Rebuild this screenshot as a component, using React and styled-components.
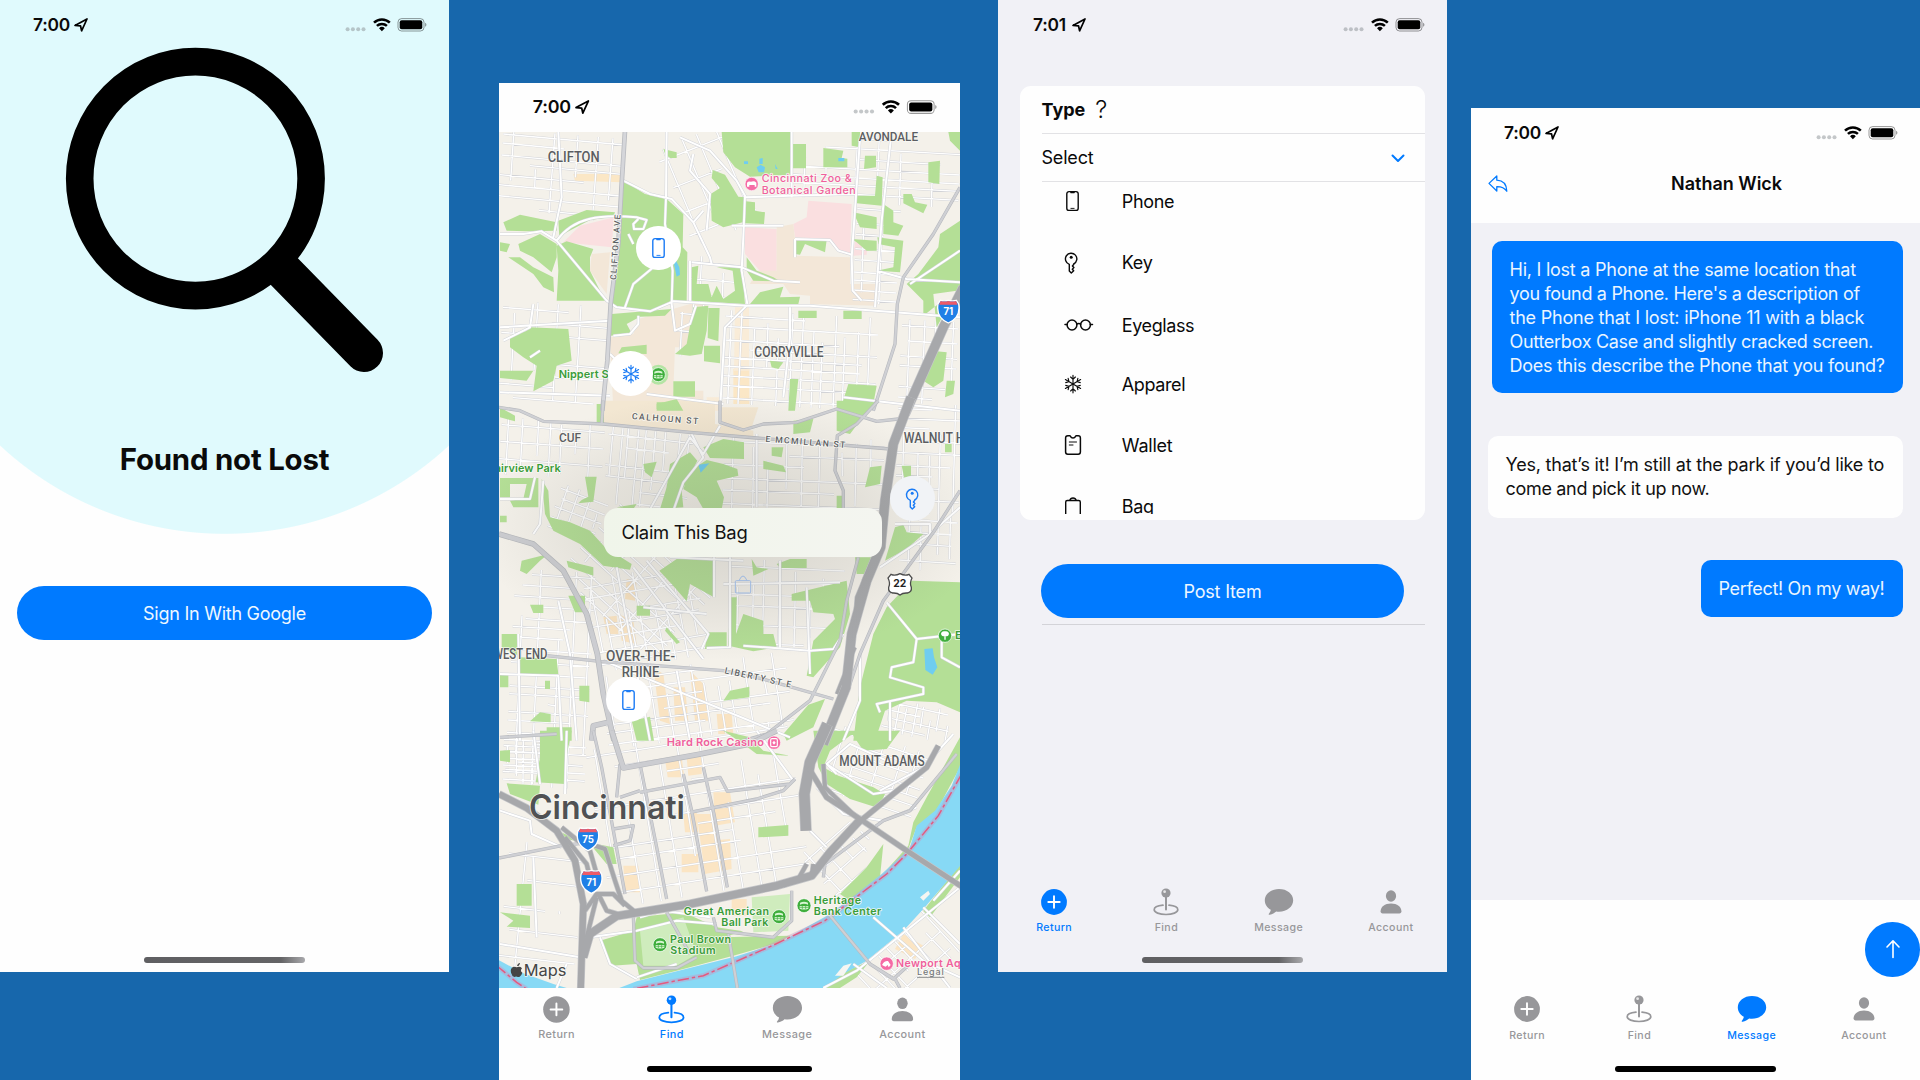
import React from "react";
import styled, { createGlobalStyle } from "styled-components";

const BLUE = "#007aff";
const GRAY = "#97979a";

const GlobalStyle = createGlobalStyle`
  * { box-sizing: border-box; }
  body { margin: 0; background: #1767ac; font-family: Inter, "Liberation Sans", sans-serif; }
`;

const Page = styled.main`
  width: 1920px;
  height: 1080px;
  overflow: hidden;
  display: flex;
  align-items: flex-start;
  background: #1767ac;
`;

const Phone = styled.section`
  flex: none;
  display: flex;
  flex-direction: column;
  overflow: hidden;
  width: ${(p) => p.$w || 449}px;
  height: ${(p) => p.$h || 972}px;
  margin-top: ${(p) => p.$top || 0}px;
  margin-left: ${(p) => p.$left || 0}px;
  background: ${(p) => p.$bg || "#fefefe"};
  color: #0a0a0a;
`;

/* ---------- status bar ---------- */

const StatusRow = styled.header`
  flex: none;
  display: flex;
  align-items: center;
  height: ${(p) => p.$h || 49}px;
  padding: 0 ${(p) => 23.5 * p.$s}px 0 ${(p) => 32.5 * p.$s}px;
`;

const Time = styled.span`
  font-size: ${(p) => 17.4 * p.$s}px;
  line-height: 20px;
  font-weight: 600;
  letter-spacing: -0.2px;
  text-align: center;
  width: ${(p) => 38 * p.$s}px;
  margin-right: ${(p) => 3.7 * p.$s}px;
`;

const Spacer = styled.span`
  flex: 1;
`;

const Glyph = styled.svg`
  flex: none;
  display: block;
  overflow: visible;
`;

function StatusBar({ time = "7:00", s = 1, h }) {
  return (
    <StatusRow $s={s} $h={h}>
      <Time $s={s}>{time}</Time>
      <Glyph width={14 * s} height={14 * s} viewBox="0 0 14 14">
        <path d="M1 7.4 13 1 7.6 12.8 6.5 7.8Z" fill="none" stroke="#000" strokeWidth="1.7" strokeLinejoin="round" />
      </Glyph>
      <Spacer />
      <Glyph width={81 * s} height={16 * s} viewBox="0 0 81 16">
        {[2.6, 7.9, 13.2, 18.5].map((x) => (
          <circle key={x} cx={x} cy="12.2" r="2" fill="#8a8f94" opacity="0.5" />
        ))}
        <g fill="none" stroke="#000" strokeWidth="2.5">
          <path d="M29 5.6a11.3 11.3 0 0 1 15.8 0" />
          <path d="M31.9 8.9a7.2 7.2 0 0 1 10 0" />
        </g>
        <path d="M34 11.2a4.2 4.2 0 0 1 5.8 0L36.9 14.2Z" />
        <rect x="53" y="1.6" width="26" height="12.4" rx="3.6" fill="none" stroke="#000" strokeOpacity="0.4" />
        <rect x="54.7" y="3.3" width="22.6" height="9" rx="2" />
        <path d="M80.200 5.800v4a2.300 2.300 0 0 0 0-4Z" opacity="0.45" />
      </Glyph>
    </StatusRow>
  );
}

/* ---------- tab bar ---------- */

const Tabs = styled.nav`
  flex: none;
  display: flex;
  padding: ${(p) => p.$pt}px 0 0;
`;

const TabItem = styled.div`
  flex: 1;
  display: flex;
  flex-direction: column;
  align-items: center;
  color: ${(p) => (p.$on ? BLUE : GRAY)};
`;

const TabLabel = styled.span`
  margin-top: ${(p) => p.$gap}px;
  font-size: ${(p) => 10.6 * p.$s}px;
  line-height: 14px;
  font-weight: 500;
  letter-spacing: ${(p) => 0.4 * p.$s}px;
`;

const tabIcons = {
  Return: (
    <>
      <circle cx="16" cy="16" r="12.9" fill="currentColor" />
      <path d="M16 10.3v11.4M10.3 16h11.4" stroke="#fff" strokeWidth="1.9" strokeLinecap="round" />
    </>
  ),
  Find: (
    <>
      <circle cx="16" cy="7" r="4.6" fill="currentColor" />
      <circle cx="14.6" cy="5.7" r="1.4" fill="#fff" opacity="0.75" />
      <path d="M16 11v12.6" stroke="currentColor" strokeWidth="2" strokeLinecap="round" />
      <path d="M13 19.2c-5 .4-8.8 2.3-8.8 4.6 0 2.7 5.2 4.7 11.8 4.7s11.8-2 11.8-4.7c0-2.3-3.8-4.2-8.8-4.6" fill="none" stroke="currentColor" strokeWidth="1.7" strokeLinecap="round" />
    </>
  ),
  Message: (
    <path d="M16 3C8 3 1.800 7.900 1.800 14.300c0 4 2.300 7.500 6 9.500-.1 1.500-.9 2.800-1.900 3.900-.5.6-.1 1.300.8 1.100 2.500-.5 4.700-1.700 6.500-3.300 1 .2 1.900.2 2.800.2 8 0 14.200-5 14.200-11.400S24 3 16 3Z" fill="currentColor" />
  ),
  Account: (
    <>
      <ellipse cx="16" cy="10" rx="5.1" ry="5.7" fill="currentColor" />
      <path d="M5.600 25.300c0-4.300 4.300-7.700 10.400-7.700s10.400 3.400 10.400 7.700c0 1.400-.7 2.100-2 2.100H7.600c-1.300 0-2-.7-2-2.100Z" fill="currentColor" />
    </>
  ),
};

function TabBar({ active, s = 1, pt, gap = 3.5 }) {
  return (
    <Tabs $pt={pt}>
      {Object.keys(tabIcons).map((name) => (
        <TabItem key={name} $on={name === active}>
          <Glyph width={32 * s} height={32 * s} viewBox="0 0 32 32">{tabIcons[name]}</Glyph>
          <TabLabel $s={s} $gap={gap}>{name}</TabLabel>
        </TabItem>
      ))}
    </Tabs>
  );
}

const HomeBar = styled.div`
  flex: none;
  align-self: center;
  width: ${(p) => p.$w || 160.5}px;
  height: 5.6px;
  border-radius: 3px;
  margin: ${(p) => (p.$mt ? `${p.$mt}px` : "auto")} 0 ${(p) => p.$mb || 9}px;
  background: ${(p) => (p.$faded ? "linear-gradient(90deg, #5f5f62 0%, #646466 85%, #a9a9ac 100%)" : "#000")};
`;

/* ---------- sign in ---------- */

const Hero = styled.div`
  flex: none;
  height: 535px;
  display: flex;
  flex-direction: column;
  background: radial-gradient(circle 330px at 224.5px 204.3px, #e0fafd 99.7%, transparent 100%);
`;

const Title = styled.h1`
  margin: 51px 0 0;
  text-align: center;
  font-size: 29.4px;
  line-height: 36px;
  font-weight: 700;
  letter-spacing: -0.21px;
  color: #0a0a0a;
`;

const Pill = styled.button`
  flex: none;
  align-self: center;
  border: 0;
  width: ${(p) => p.$w}px;
  height: 54px;
  margin-top: ${(p) => p.$mt}px;
  padding: 2px 0 0;
  border-radius: 27px;
  background: ${BLUE};
  color: #eef7ff;
  font: 400 18px/22px Inter, "Liberation Sans", sans-serif;
  letter-spacing: ${(p) => p.$ls}px;
`;

function SignIn() {
  return (
    <Phone>
      <Hero>
        <StatusBar />
        <Glyph width="449" height="342" viewBox="0 49 449 342">
          <ellipse cx="195.4" cy="178.6" rx="115.7" ry="117" fill="none" stroke="#000" strokeWidth="27.6" />
          <path d="M284.500 271.700 364 353" stroke="#000" strokeWidth="38" strokeLinecap="round" />
        </Glyph>
        <Title>Found not Lost</Title>
      </Hero>
      <Pill $w={415} $mt={51} $ls={-0.26}>Sign In With Google</Pill>
      <HomeBar $faded />
    </Phone>
  );
}

/* ---------- map ---------- */

const MapArea = styled.div`
  position: relative;
  flex: none;
  height: 856.5px;
  overflow: hidden;
`;

const MapSvg = styled.svg`
  display: block;
  width: 461px;
  height: 856.5px;
`;

const Pin = styled.div`
  position: absolute;
  left: ${(p) => p.$x}px;
  top: ${(p) => p.$y}px;
  width: 44.6px;
  height: 44.6px;
  margin: -22.3px 0 0 -22.3px;
  border-radius: 50%;
  display: grid;
  place-items: center;
  color: #1a7bf5;
  background: ${(p) => p.$bg || "#fff"};
`;

const Callout = styled.div`
  position: absolute;
  left: 105px;
  top: 376.5px;
  width: 277.5px;
  height: 49px;
  padding-left: 17.5px;
  border-radius: 14px;
  background: linear-gradient(90deg, #f0f5ea, #f4f5f0);
  color: #111;
  font-size: 18.4px;
  line-height: 49px;
  letter-spacing: -0.27px;
`;

const itemIcons = {
  phone: (
    <>
      <rect x="2.8" y="1.6" width="11.4" height="18.8" rx="2.2" fill="none" stroke="currentColor" strokeWidth="1.4" />
      <path d="M6 2h5l-.6 1.300H6.600Z" fill="currentColor" />
      <path d="M6.500 18.400h4" stroke="currentColor" strokeWidth="0.9" />
    </>
  ),
  key: (
    <>
      <path d="M6 12.300V19l2 2 2.400-2.300-1.400-1.500 1.600-1.600-1.500-1.600 1.300-1.500v-.5A5.700 5.700 0 1 0 6 12.300Z" transform="translate(-.7 0)" fill="none" stroke="currentColor" strokeWidth="1.4" strokeLinejoin="round" />
      <circle cx="7.200" cy="5.200" r="1.5" fill="currentColor" />
    </>
  ),
  glasses: (
    <g fill="none" stroke="currentColor" strokeWidth="1.5">
      <circle cx="8" cy="11" r="4.9" />
      <circle cx="21.5" cy="11" r="4.9" />
      <path d="M12.700 10.200q2.050-1.400 4.100 0M3.200 10.500 1 10.500M26.300 10.500h2.200" strokeLinecap="round" />
    </g>
  ),
  snow: (
    <g fill="none" stroke="currentColor" strokeWidth="1.15" strokeLinecap="round">
      {[0, 60, 120, 180, 240, 300].map((a) => (
        <path key={a} transform={`rotate(${a} 9 11)`} d="M9 11V2.200M6.600 4 9 6.300 11.400 4" />
      ))}
    </g>
  ),
  wallet: (
    <g fill="none" stroke="currentColor" strokeWidth="1.5" strokeLinejoin="round">
      <path d="M3.800 1.800h2q.7 0 .9 1 .5 1.300 2.300 1.300t2.300-1.300q.2-1 .9-1h2q2.200 0 2.200 2.200v14q0 2.200-2.200 2.200H3.800q-2.200 0-2.200-2.200V4q0-2.200 2.200-2.200Z" />
      <path d="M4.900 8h8M4.900 11h4.500" strokeWidth="1.2" />
    </g>
  ),
  bag: (
    <g fill="none" stroke="currentColor" strokeWidth="1.4" strokeLinejoin="round">
      <path d="M3.300 5.500h11.400q1.600 0 1.600 1.600v12q0 1.600-1.600 1.600H3.300q-1.600 0-1.600-1.600v-12q0-1.600 1.600-1.600Z" />
      <path d="M5.800 5.500a3.300 3.300 0 0 1 6.400 0" />
    </g>
  ),
};

const iconWidth = { phone: 17, key: 15, glasses: 30, snow: 18, wallet: 18, bag: 18 };

function ItemIcon({ name }) {
  return (
    <Glyph width={iconWidth[name]} height={22} viewBox={`0 0 ${iconWidth[name]} 22`}>
      {itemIcons[name]}
    </Glyph>
  );
}

/* Side streets: a loose rotated grid with uneven line ends. */
function streets(x0, y0, x1, y1, angle, dx, dy, seed) {
  let n = seed;
  const rnd = () => {
    n = (n * 16807) % 2147483647;
    return n / 2147483647;
  };
  for (let i = 0; i < 5; i++) rnd();
  const cx = (x0 + x1) / 2;
  const cy = (y0 + y1) / 2;
  const hw = (x1 - x0) / 2;
  const hh = (y1 - y0) / 2;
  const c = Math.cos((angle * Math.PI) / 180);
  const s = Math.sin((angle * Math.PI) / 180);
  const pt = (a, b) => `${(cx + a * c - b * s).toFixed(0)} ${(cy + a * s + b * c).toFixed(0)}`;
  let d = "";
  for (let a = -hw + dx / 2; a < hw; a += dx * (0.7 + rnd() * 0.6)) {
    const from = -hh + (rnd() < 0.4 ? rnd() * hh : 0);
    const to = hh - (rnd() < 0.4 ? rnd() * hh : 0);
    d += `M${pt(a, from)}L${pt(a + 3, to)}`;
  }
  for (let b = -hh + dy / 2; b < hh; b += dy * (0.7 + rnd() * 0.6)) {
    const from = -hw + (rnd() < 0.4 ? rnd() * hw : 0);
    const to = hw - (rnd() < 0.4 ? rnd() * hw : 0);
    d += `M${pt(from, b)}L${pt(to, b + 2)}`;
  }
  return d;
}

const sideStreets = [
  [30, 190, 395, 440, 5, 62, 30], [545, 190, 760, 500, -22, 50, 70], [905, 190, 1410, 400, 3, 76, 32],
  [1095, 400, 1225, 700, 3, 45, 34], [30, 700, 350, 990, 4, 72, 42], [700, 730, 1160, 1010, 3, 34, 36],
  [1230, 750, 1400, 1000, 3, 46, 36], [30, 1050, 340, 1220, 4, 40, 46], [345, 1080, 600, 1310, 6, 24, 46],
  [700, 1100, 1180, 1320, 2, 52, 40], [1220, 1000, 1410, 1330, 2, 36, 32], [60, 1500, 300, 2150, 3, 52, 30],
  [300, 1500, 640, 1780, -10, 40, 44], [250, 1380, 640, 1680, 42, 70, 34], [720, 1470, 1060, 1730, 2, 42, 46],
  [340, 1780, 900, 2000, -8, 42, 34], [320, 1990, 930, 2470, -9, 54, 42], [40, 2320, 270, 2720, 6, 100, 80],
  [1080, 2560, 1400, 2760, -42, 44, 50], [1000, 2000, 1300, 2200, 18, 60, 34], [190, 1260, 340, 1400, 20, 36, 30],
  [1180, 1900, 1380, 2000, 12, 28, 24], [40, 1980, 150, 2140, 2, 22, 18], [560, 700, 640, 860, 4, 26, 60],
  [1230, 1330, 1400, 1500, 3, 50, 40], [600, 560, 760, 700, 4, 60, 40], [960, 2260, 1180, 2440, -42, 38, 48],
]
  .map((a, i) => streets(...a, 91 + i * 37))
  .join("");

const tints = {
  A: [
    ["#fadfe0", "M955 390 1085 400 1080 550 1045 540 1020 505 915 500 910 460 950 440ZM765 470 860 475 860 600 820 612 765 550ZM220 515 270 465 372 440 365 530ZM1095 512 1132 520 1130 552 1090 555Z"],
    ["#f3e7d8", "M915 555 1080 560 1080 640 1160 640 1155 705 960 700 960 675 900 670 880 640 780 640 800 600 860 600 860 470 910 460 915 505ZM305 550 360 545 350 670 300 600ZM445 745 600 700 650 700 640 780 600 830 555 830 550 960 640 960 640 1020 370 1020 360 800 430 790Z"],
    ["#fbe7c6", "M730 895h48v105h-48ZM250 310h145v25l-140-5Z"],
    ["#f9ecd8", "M735 710h42v190h-45ZM650 980h40v40h-40Z"],
  ],
  B: [
    ["#f3e7d2", "M345 0h330v70l115 20v20l-450-40ZM690 20h115l-20 60-60 5-30-25Z"],
    ["#f9e3c2", "M410 535l30 5-5 60-30-5ZM340 650l40-5 5 55-35 0ZM385 640l45 20 10 70-45-10ZM490 800l30 20 20 150-30-10ZM550 860l35 0 10 100-40 0ZM600 810l40 40 15 110-40 0ZM680 940l45 0 5 60-45 0Z"],
  ],
  C: [
    ["#fbe5c4", "M1240 610l60 35-25 40-60-30ZM525 85l50-5 8 60-50 0ZM590 80l45-5 0 55-40 5ZM620 250l50 0 25 170-50 10ZM670 185l50 0 15 90-60 10ZM575 370h50v55h-50ZM400 405l45 0 5 80-45 0ZM580 250l40-5 5 60-40 0ZM725 505h45v50h-45ZM660 330l60-5 5 90-50 10Z"],
  ],
};

const parks = {
  A: "M695 184H905L900 312 780 318 735 290 700 245ZM668 298 705 312 745 378 765 380 758 455 700 470 665 450 662 370 690 352 665 322ZM768 392 795 395V420L825 425 822 460 765 458ZM400 330 465 370 530 385 580 430 578 530 592 545 590 690 545 690 480 720 375 710 362 690 385 500ZM40 455 90 432 200 455 200 480 110 482 50 480ZM205 450 290 418 375 425 370 438 300 448 230 485 208 500ZM200 525 230 512 310 535 300 560 300 600 345 690 200 690 205 600ZM85 520 150 490 200 520 200 560 185 605 130 560 90 540ZM55 560 90 560 130 590 190 620 192 665 160 650 130 610ZM30 515 60 520 50 545 30 540ZM907 220h41v73h-41ZM1000 232 1060 240 1055 262 1072 264V290H1000ZM1085 184h25v46l-25-5ZM1125 255h33v35l-36 5ZM1315 275 1350 270 1348 340 1315 335ZM1375 184H1410V240L1380 210ZM1100 375 1155 375 1160 315 1178 320 1175 405 1100 398ZM1090 425 1160 440V475L1110 470ZM1180 400 1210 420V455L1240 465 1225 495 1180 490ZM1240 370 1265 370 1275 395 1312 402 1300 428 1240 398ZM1410 450 1350 490 1345 530 1285 610 1250 640 1300 690V735L1345 700 1410 680ZM1162 500 1240 510 1230 605 1160 600 1210 590 1215 530 1165 520ZM915 505 1010 508 1005 545 945 520 930 552 915 550ZM1085 505 1160 510V540L1130 540 1100 515ZM605 590 625 585 620 640 655 640 665 680 680 645 700 685 735 660 728 600 680 590 750 590 760 640 765 700 605 690ZM770 560 800 600 850 620 870 632 790 630 770 600ZM810 665 880 648 870 680 930 678 925 700 780 700ZM365 730 545 715 525 735 450 738 410 760 425 788 362 795ZM610 710 655 705 650 780 635 850 600 855 555 850 590 820ZM655 712h34l-4 100-32-10ZM642 825h48v53l-48-6ZM550 932h65v46h-65ZM60 800 110 780 120 770 235 775 245 870 200 885 190 930 130 962 140 885 100 860 60 830ZM30 900 130 900 110 930 30 922ZM1060 720h55v25h-55ZM925 720h55v22h-55ZM1325 840 1370 845 1360 930 1330 950 1300 930ZM1075 940 1160 945 1150 1000 1100 1020 1050 1020ZM900 925h25l-10 95h-20ZM1370 930h25l-5 40-25 10ZM395 830 470 822V850L385 848ZM500 1000 560 985 580 1020H500ZM520 235 560 245 560 262 540 262 525 250ZM840 870l40 5-15 20-20-5ZM1330 670l70-10-60 110Z",
  B: "M30 20 75 45 75 62 30 50ZM320 10h22v60h-22ZM500 5h65v20h-65ZM1040 0H1160L1110 60 1080 100 1040 90ZM910 60 970 55 960 95 910 100ZM640 140 700 115 762 125V175L660 172ZM600 155 622 180 575 270 580 320 510 325 530 260 540 190ZM600 210 650 178 700 190 742 205 745 225 680 240 702 290 695 325 640 325 620 290 580 265ZM845 140h35l-5 30-30-5ZM820 180 880 195 888 215 820 205ZM460 190 500 183 485 230 465 215ZM30 232H145V320L70 320 60 300 100 295 110 250 60 250 60 290 30 290ZM285 228h35l-10 75-45 5 10-10 20-10ZM155 235 175 270 180 350 240 365 300 390 345 440 425 490 420 507 340 495 270 430 190 390 165 340ZM380 320 440 310 430 325ZM30 345h20v20H30ZM508 510 560 475H672V590L600 550 590 602 545 550ZM785 475 800 500 835 505 790 525ZM860 490 900 475H950V502H870ZM1095 470h50v50h-45ZM720 590H740L738 700 760 640 820 660V700H850L860 740 790 752 715 735ZM905 580 1070 540 1080 640 1050 740 970 830 950 825 970 720 1035 655 1030 640 970 635 960 600 905 600ZM650 695h60v50h-65ZM720 870 778 858V890L700 900ZM530 680 570 725 560 730 525 690ZM440 615h40v30h-40ZM235 585h50v50h-30ZM120 612h40v25h-30ZM95 480 175 460 150 480 110 520 90 510ZM230 480 310 500V525L235 500ZM35 700H90V770L200 775 205 820H90L85 765 35 740ZM30 820h25v40H30ZM268 855h30v50l-30-5ZM165 840h15v25h-15ZM120 962 150 935 182 940V965ZM170 980h75v40h-75ZM425 960 480 948 492 1020H440ZM1265 540 1410 545V935L1340 905 1250 900 1185 930 1155 1020H1090L1110 860 1150 700 1190 620ZM1185 480 1215 380 1240 372 1250 395 1300 400 1250 445ZM1140 200 1175 195 1170 250 1125 260ZM1235 195h28v30l-20 8ZM1365 130h20v25h-20ZM955 912 1005 895 970 980 890 1020 880 1000ZM1040 285h18v38h-18Z",
  C: "M150 0H245L230 75 225 160 137 155 150 80ZM30 60 60 58V95L30 90ZM50 158 150 165 145 222 60 190ZM30 545 120 555V592L50 588 70 570ZM80 460h45v65H80ZM805 290 895 283V315L805 320ZM440 560 580 545 680 590 760 602 700 620 900 615 870 635 730 675 560 720 450 748 440 700 365 705 330 630 430 600ZM180 290 270 330 370 350 380 400 350 400 300 340 230 325ZM970 0H1100L1020 60 1000 110 1045 135 1150 170 1185 190 1165 232 1080 205 1010 160 985 110ZM1080 0 1230 0 1190 55 1120 60ZM700 0 780 20 820 60 900 75 800 70 760 40ZM1170 440 1255 345 1270 275 1310 200 1410 20V110L1335 250 1280 290 1245 380 1130 475 1080 510 1050 490 1130 410 1180 340ZM1300 540 1410 400V440L1320 560ZM1000 772 1060 725 1140 690 1100 740 1050 772Z",
};

const roadsWhite = {
  A: "M30 490 100 490 155 482 200 510 350 690 380 710 480 722 550 692 770 705 960 705 1410 740M200 510C250 440 330 430 440 440L470 448 460 475 432 475 430 460 445 445M415 490 430 520M400 330 480 370 545 385 610 455 640 420M530 184 528 380 525 460 548 600 545 700M570 200 660 240 740 330 765 375 760 500 755 600 772 700M405 710 430 640 490 590M600 570V690M605 575 755 590 850 630 930 635M915 505V560M915 505 1020 508 1045 540 1085 552M1110 205 1085 560 1088 660 1115 690M1205 184 1175 450 1155 710M765 380 900 375 1100 370M545 700 555 780 600 760 618 705M770 705 705 770 690 1020M190 500 215 380 205 184M725 465 880 465M610 455 660 560 665 580M610 250 600 300 660 370 650 480M1160 600 1250 625 1410 635M1260 640 1410 540M30 770 360 750M40 810 120 770 130 700M30 965 360 975M470 970 700 1000M900 710V800L880 980M120 860 150 840M370 795 420 790 445 760V735M1060 980 1410 1020M905 184 905 380M360 850 380 870",
  B: "M605 100 640 170 580 245 550 330M690 75 640 160 600 110 400 470M720 470V740L650 742M672 470V590M1190 605 1280 715 1410 700M1280 715 1270 785 1205 800 1200 830 1300 860 1300 880 1160 910 1170 935M1355 690V770L1410 800M470 480 655 700 635 745M430 500 640 775M160 240 150 370 130 400M205 600 240 760 260 1020M85 700 90 1020M30 820 205 825 215 1020M1060 700 1030 745 960 750 760 735M30 295H120L135 230M380 500 480 1020M540 470 760 480M700 550 1050 545M460 620 650 640M340 780 900 1010M1410 320 1320 400 1170 500M1200 900 1200 1020M870 480V740M800 100V320M560 810 600 1020M950 560 960 820M1320 400 1320 370H1215M1110 760 1110 900 1060 1020",
  C: "M30 240 120 270 125 310 215 350M300 620 440 600 560 570 680 580M230 700 200 772M330 620 360 700 440 745M450 560 520 540 660 560M560 700 440 740M1040 130 1010 100 1080 40 1190 90M980 170 1060 250 1180 270 1280 230M1010 100 1150 190 1210 180M1150 560 1300 690 1410 740M1240 590 1380 772M1300 530 1410 640M1090 700 1190 772M1330 510 1410 420M1000 772 1100 720 1410 470M130 380 140 620M30 640 270 680M150 160 130 0M230 0 225 190M960 300 1010 350M910 150 800 0M1170 180 1300 110 1390 10",
};

const roadsGray = {
  A: "M1410 350 1330 490 1240 620 1222 700 1215 820 1150 1020",
  B: "M27 20 90 30 160 62 340 70 600 95 800 112 1200 145M690 0V65L760 88 820 70 920 65 1040 25 1160 62 1225 55M1165 0 1100 70 1042 105 1035 210 1060 270V325M340 0 335 70M170 765 330 782 700 810 800 830 1030 895M1410 270 1330 395 1180 600 1110 760 1070 880M1105 470 1070 600 1050 720 960 900 830 1000 760 1020M30 1010 200 1000",
  C: "M310 0 335 110 370 300 405 490M450 100 500 350 530 505M580 130 605 240 650 482M640 110 672 250 712 470M370 295 430 285 420 330 370 345M450 185 690 140 712 182 900 160M390 200 450 180M600 245 800 205 880 180 915 145M27 382 215 345 300 335M430 555 435 690 460 712 560 712 620 680M530 545 600 670M670 560 680 600 850 620 905 570 905 480M715 610 742 772M1020 555 1140 700 1220 750M1000 440 1005 400 1180 270 1260 240 1400 70M390 100 380 200M1140 700 1210 745 1260 700M1215 745 1230 772",
};

const roadsArterial = {
  B: "M27 400 130 430 220 510 290 640 322 760 340 880 372 1020M305 1020 310 975 355 965",
  C: "M365 0 400 112 620 72 780 40 860 0",
};

const highways = {
  A: [[28, "M1420 650 1360 770 1245 1030"]],
  B: [
    [28, "M1263-10 1210 130 1185 300 1172 440 1130 540 1085 700 1068 860 1000 1030"],
    [10, "M1150 470 1100 590 1090 720M1095 740 1040 880"],
  ],
  C: [
    [32, "M1012-20 960 95 943 190 948 300"],
    [20, "M27 190 110 232 200 300 255 390 280 520 272 780"],
    [13, "M215 290 300 360 320 430M255 325 345 355 375 450 395 510 440 548M225 320 290 400 300 440M285 540 320 490 370 490 405 525M325 490 350 540 400 555M290 620 320 500M1000 100 1005 170 1100 260M950 400 925 445 880 465M970 400 965 440"],
    [24, "M280 680 300 610 380 556 600 520 860 465 965 435 1020 365 1110 268"],
    [16, "M1100 280 1210 190 1310 110 1345 45M955 110 1010 200 1110 265 1250 360 1415 468"],
  ],
};

const OFFSET = { A: 0, B: 990, C: 1980 };

function Band({ id, children }) {
  return <g transform={`translate(0 ${OFFSET[id]})`}>{children}</g>;
}

function Label({ x, y, w, size = 38, fill = "#5b5d61", weight = 500, font = "Roboto", squeeze, rotate, children }) {
  return (
    <text
      x={x}
      y={y}
      textLength={w}
      lengthAdjust={squeeze ? "spacingAndGlyphs" : "spacing"}
      fontSize={size}
      fontWeight={weight}
      fontFamily={`${font}, "Liberation Sans", sans-serif`}
      fill={fill}
      stroke="#fbfbf6"
      strokeOpacity="0.85"
      strokeWidth="5"
      strokeLinejoin="round"
      paintOrder="stroke"
      transform={rotate ? `rotate(${rotate} ${x} ${y})` : undefined}
    >
      {children}
    </text>
  );
}

function Interstate({ x, y, n }) {
  return (
    <g transform={`translate(${x} ${y})`}>
      <path d="M-24-33Q-12-30 0-33 12-30 24-33L31-22Q38 18 0 35-38 18-31-22Z" fill="#1f7fe6" stroke="#fff" strokeWidth="4" />
      <path d="M-23-31Q-12-28 0-31 12-28 23-31L28-20H-28Z" fill="#ee5a68" />
      <text y="12" textAnchor="middle" fontFamily="Inter, sans-serif" fontSize="29" fontWeight="700" fill="#fff">{n}</text>
    </g>
  );
}

function Stadium({ x, y }) {
  return (
    <g transform={`translate(${x} ${y})`}>
      <circle r="21" fill="#3fae3c" stroke="#fff" strokeOpacity="0.7" strokeWidth="3" />
      <path d="M-12-3Q0-9 12-3V-9Q0-14-12-9ZM-13 1h26V9Q0 14-13 9Z" fill="#d8f5d2" />
      <path d="M-5 1v10M5 1v10M-13 5h26" stroke="#3fae3c" strokeWidth="2" />
    </g>
  );
}

const GREEN = "#3a9c3a";
const PINK = "#f0609c";

function CityMap() {
  const ids = ["A", "B", "C"];
  return (
    <MapSvg viewBox="27 184 1383 2569.5">
      <defs>
        <radialGradient id="shade">
          <stop offset="0" stopColor="#5c5c54" stopOpacity="0.2" />
          <stop offset="0.55" stopColor="#5c5c54" stopOpacity="0.11" />
          <stop offset="1" stopColor="#5c5c54" stopOpacity="0" />
        </radialGradient>
      </defs>
      <rect x="0" y="150" width="1440" height="2640" fill="#f4f1ea" />
      {ids.map((id) => (
        <Band key={id} id={id}>
          {tints[id].map(([c, d]) => <path key={c} d={d} fill={c} />)}
        </Band>
      ))}
      <g fill="none">
        <path d={sideStreets} stroke="#d2d3d7" strokeWidth="6.5" />
        <path d={sideStreets} stroke="#fff" strokeWidth="4.2" />
      </g>
      {ids.map((id) => (
        <Band key={id} id={id}><path d={parks[id]} fill="#b4df96" /></Band>
      ))}
      <Band id="C">
        <path d="M450 600 580 560 620 670 560 705 460 705ZM785 500 900 490 895 600 790 605Z" fill="#cfecbd" />
        <path d="M1415 90 1385 165 1335 240 1280 285 1258 355 1175 430 1100 490 1020 550 930 600 880 632 740 677 560 722 440 752 380 775H1000L1060 730 1130 690 1240 600 1300 535 1415 400ZM20 685 100 728 190 760 240 775H20Z" fill="#87d9f5" />
        <path d="M1290 500 1315 480 1320 490 1300 510ZM1035 735 1060 705 1085 698 1060 735Z" fill="#f6f6f2" />
        <path d="M1415 130 1345 255 1250 370 1190 430 1005 570 840 648 640 735 430 775M20 705 80 755 110 775" fill="none" stroke="#c79ac4" strokeWidth="14" opacity="0.45" />
        <path d="M1415 130 1345 255 1250 370 1190 430 1005 570 840 648 640 735 430 775M20 705 80 755 110 775" fill="none" stroke="#e5597f" strokeWidth="4.5" strokeDasharray="34 9 10 9" />
      </Band>
      <Band id="B"><path d="M1303 745 1328 743 1332 770 1342 800 1328 822 1306 808ZM625 192 658 188 632 216Z" fill="#6fcdf0" /></Band>
      <path d="M800 290 812 282 825 290 822 305 806 305ZM808 264 818 262 818 280 808 280ZM762 272h12v8h-12ZM855 280l8 15-6 0ZM558 570 568 590 570 612 560 618 552 580ZM1045 262h18v10h-18Z" fill="#6fcdf0" />
      {ids.map((id) => (
        <g key={id} transform={`translate(0 ${OFFSET[id]})`} fill="none" strokeLinejoin="round">
          <path d={roadsWhite[id]} stroke="#d3d5da" strokeWidth="9" />
          <path d={roadsWhite[id]} stroke="#fff" strokeWidth="6" />
        </g>
      ))}
      <g fill="none">
        <path d="M405 180 395 340 385 520 362 700 352 870 337 1020" stroke="#b9bbc0" strokeWidth="14" />
        <path d="M405 180 395 340 385 520 362 700 352 870 337 1020" stroke="#d5d6da" strokeWidth="9" />
      </g>
      {ids.map((id) => (
        <g key={id} transform={`translate(0 ${OFFSET[id]})`} fill="none" strokeLinejoin="round">
          <path d={roadsGray[id]} stroke="#b7b9be" strokeWidth="10" />
          <path d={roadsGray[id]} stroke="#cfd0d4" strokeWidth="6.5" />
          <path d={roadsArterial[id]} stroke="#b5b7bb" strokeWidth="17" />
          <path d={roadsArterial[id]} stroke="#cccdd1" strokeWidth="13" />
        </g>
      ))}
      {ids.map((id) => (
        <g key={id} transform={`translate(0 ${OFFSET[id]})`} fill="none" strokeLinejoin="round">
          {highways[id].map(([w, d]) => <path key={d} d={d} stroke="#c6c7ca" strokeWidth={w + 3} />)}
          {highways[id].map(([w, d]) => <path key={d} d={d} stroke="#a7a8ab" strokeWidth={w - 1} />)}
        </g>
      ))}
      <ellipse cx="720" cy="1370" rx="760" ry="400" fill="url(#shade)" />

      <Label x={173} y={275} w={156} size={45} squeeze>CLIFTON</Label>
      <Label x={1106} y={210} w={178} size={41} squeeze>AVONDALE</Label>
      <Label x={793} y={860} w={208} size={42} squeeze>CORRYVILLE</Label>
      <Label x={378} y={628} w={196} size={25} rotate={-86}>CLIFTON AVE</Label>
      <Label x={206} y={923} w={150} size={33} weight={600} font="Inter" fill={GREEN}>Nippert S</Label>
      <Label x={815} y={335} w={270} size={32} font="Inter" fill={PINK}>Cincinnati Zoo &amp;</Label>
      <Label x={815} y={369} w={282} size={32} font="Inter" fill={PINK}>Botanical Garden</Label>
      <circle cx="785" cy="340" r="20" fill="#f56ba5" stroke="#fff" strokeOpacity="0.6" strokeWidth="3" />
      <path d="M771 348V336Q775 331 783 333 793 329 799 336V348H794V343H778V348Z" fill="#fff" />
      <Interstate x={1375} y={722} n="71" />
      <circle cx="505" cy="912" r="30" fill="#b4e4a4" />
      <Stadium x={505} y={912} />

      <Band id="B">
        <Label x={425} y={55} w={200} size={26} rotate={4.5}>CALHOUN ST</Label>
        <Label x={826} y={123} w={240} size={26} rotate={4.5}>E MCMILLAN ST</Label>
        <Label x={207} y={123} w={66} size={41} squeeze>CUF</Label>
        <Label x={1241} y={128} w={182} size={42} squeeze>WALNUT H</Label>
        <Label x={14} y={215} w={198} size={33} weight={600} font="Inter" fill={GREEN}>airview Park</Label>
        <Label x={9} y={776} w={163} size={42} squeeze>WEST END</Label>
        <Label x={348} y={782} w={207} size={43} squeeze>OVER-THE-</Label>
        <Label x={395} y={829} w={113} size={43} squeeze>RHINE</Label>
        <Label x={703} y={818} w={203} size={26} rotate={12}>LIBERTY ST E</Label>
        <path d="M1203 521Q1215 527 1230 519 1245 527 1257 521L1266 532Q1258 548 1264 560 1266 574 1252 577 1238 576 1230 583 1222 576 1208 577 1194 574 1196 560 1202 548 1194 532Z" fill="#fff" stroke="#4b4b4b" strokeWidth="4" />
        <text x="1229" y="560" textAnchor="middle" fontFamily="Inter, sans-serif" fontSize="31" fontWeight="700" fill="#222">22</text>
        <circle cx="1365" cy="705" r="20" fill="#3fae3c" stroke="#fff" strokeOpacity="0.7" strokeWidth="3" />
        <path d="M1365 692a9 8 0 0 0-11 11q4 5 9 3v11h4V706q6 2 9-3a9 8 0 0 0-11-11Z" fill="#fff" />
        <Label x={1395} y={716} size={33} weight={600} font="Inter" fill={GREEN}>E</Label>
        <g fill="none" stroke="#9db8e0" strokeWidth="3">
          <rect x="736" y="540" width="46" height="37" rx="3" />
          <path d="M747 540q12-28 24 0" />
        </g>
      </Band>

      <Band id="C">
        <Label x={530} y={47} w={292} size={33} weight={600} font="Inter" fill={PINK}>Hard Rock Casino</Label>
        <circle cx="852" cy="36" r="20" fill="#f56ba5" stroke="#fff" strokeOpacity="0.6" strokeWidth="3" />
        <rect x="842" y="24" width="20" height="24" rx="4" fill="none" stroke="#fff" strokeWidth="3.5" />
        <path d="M852 30l5 6-5 6-5-6Z" fill="#fff" />
        <Label x={1048} y={105} w={256} size={42} squeeze>MOUNT ADAMS</Label>
        <Label x={117} y={265} w={468} size={100} font="Inter" weight={600} fill="#505153" squeeze>Cincinnati</Label>
        <Interstate x={294} y={325} n="75" />
        <Interstate x={304} y={453} n="71" />
        <Label x={581} y={554} w={256} size={32} weight={600} font="Inter" fill={GREEN}>Great American</Label>
        <Label x={694} y={587} w={141} size={32} weight={600} font="Inter" fill={GREEN}>Ball Park</Label>
        <Label x={971} y={521} w={142} size={32} weight={600} font="Inter" fill={GREEN}>Heritage</Label>
        <Label x={971} y={554} w={203} size={32} weight={600} font="Inter" fill={GREEN}>Bank Center</Label>
        <Label x={540} y={636} w={183} size={32} weight={600} font="Inter" fill={GREEN}>Paul Brown</Label>
        <Label x={541} y={670} w={136} size={32} weight={600} font="Inter" fill={GREEN}>Stadium</Label>
        <Stadium x={867} y={558} />
        <Stadium x={942} y={525} />
        <Stadium x={510} y={642} />
        <circle cx="1190" cy="699" r="20" fill="#f56ba5" stroke="#fff" strokeOpacity="0.6" strokeWidth="3" />
        <path d="M1176 703q6-13 18-12l8 12-6 7-3-7-6 5q-5-1-11-5Z" fill="#fff" />
        <Label x={1218} y={710} w={194} size={32} weight={600} font="Inter" fill={PINK}>Newport Aq</Label>
        <path d="M86 705q6-7 4-8-7 1-9 8 2 2 5 0ZM80 710q-6-3-11-1-9 5-6 17 3 11 10 13 4-2 8-1 5 2 8 0 6-4 8-12-8-5-1-13-6-7-16-3Z" fill="#454545" />
        <Label x={101} y={737} w={128} size={49} font="Inter" weight={400} fill="#454545" squeeze>Maps</Label>
        <Label x={1281} y={734} w={80} size={27} font="Inter" weight={500} fill="#77797c">Legal</Label>
        <path d="M1281 740h82" stroke="#77797c" strokeWidth="2.5" />
      </Band>
    </MapSvg>
  );
}

function FindScreen() {
  return (
    <Phone $w={461} $h={997} $top={83} $left={50}>
      <StatusBar s={1.027} h={48.5} />
      <MapArea>
        <CityMap />
        <Pin $x={159.5} $y={116.5}><ItemIcon name="phone" /></Pin>
        <Pin $x={131.7} $y={242}><ItemIcon name="snow" /></Pin>
        <Pin $x={413.7} $y={367} $bg="#f1f3f6"><ItemIcon name="key" /></Pin>
        <Pin $x={129.7} $y={568}><ItemIcon name="phone" /></Pin>
        <Callout>Claim This Bag</Callout>
      </MapArea>
      <TabBar active="Find" s={1.027} pt={4.5} gap={1.5} />
      <HomeBar $w={165} $mb={8.5} />
    </Phone>
  );
}

/* ---------- post an item ---------- */

const Card = styled.div`
  flex: none;
  display: flex;
  flex-direction: column;
  width: 405px;
  height: 434px;
  margin: 37px 0 0 22px;
  padding-left: 21.5px;
  border-radius: 11px;
  background: #fefefe;
`;

const FormRow = styled.div`
  flex: none;
  display: flex;
  align-items: center;
  height: 47.8px;
  padding: 1px 20.5px 0 0;
  border-bottom: 1px solid #e2e2e5;
  font-size: 18px;
  font-weight: ${(p) => (p.$bold ? 700 : 400)};
  letter-spacing: ${(p) => p.$ls || 0}px;
`;

const Options = styled.div`
  flex: none;
  height: 332px;
  overflow: hidden;
`;

const Option = styled.div`
  display: flex;
  align-items: center;
  height: 24px;
  margin-top: ${(p) => p.$gap}px;
  padding-left: 22.3px;
  font-size: 18px;
  letter-spacing: ${(p) => p.$ls}px;
`;

const OptionIcon = styled.span`
  width: 58px;
  display: flex;
`;

const Help = styled.span`
  margin-left: 10px;
  padding-top: 1px;
  font-size: 24px;
  line-height: 24px;
  font-weight: 300;
`;

const Rule = styled.div`
  flex: none;
  height: 1px;
  margin: 6px 22px 0 43.5px;
  background: #d3d3d8;
`;

const options = [
  ["phone", "Phone", 7.5, -0.34],
  ["key", "Key", 37.7, -0.34],
  ["glasses", "Eyeglass", 38.3, -0.4],
  ["snow", "Apparel", 35.3, -0.38],
  ["wallet", "Wallet", 36.7, -0.23],
  ["bag", "Bag", 37, -0.3],
];

function PostScreen() {
  return (
    <Phone $left={38} $bg="#f1f1f6">
      <StatusBar time="7:01" />
      <Card>
        <FormRow $bold>Type<Help>?</Help></FormRow>
        <FormRow $ls={-0.18}>
          Select
          <Spacer />
          <Glyph width="14" height="14" viewBox="0 0 14 14">
            <path d="m1.500 4.500 5.500 5.500 5.500-5.500" fill="none" stroke={BLUE} strokeWidth="2" strokeLinecap="round" strokeLinejoin="round" />
          </Glyph>
        </FormRow>
        <Options>
          {options.map(([icon, name, gap, ls]) => (
            <Option key={name} $gap={gap} $ls={ls}>
              <OptionIcon><ItemIcon name={icon} /></OptionIcon>
              {name}
            </Option>
          ))}
        </Options>
      </Card>
      <Pill $w={362.5} $mt={44} $ls={-0.2}>Post Item</Pill>
      <Rule />
      <Spacer />
      <TabBar active="Return" pt={0} />
      <HomeBar $faded $mt={22} />
    </Phone>
  );
}

/* ---------- chat ---------- */

const ChatHead = styled.div`
  flex: none;
  display: grid;
  grid-template-columns: 120px 1fr 96px;
  align-items: center;
  height: 66px;
  padding: 0 0 13px 16.5px;
`;

const ChatName = styled.h2`
  margin: 0;
  padding-left: 63.5px;
  font-size: 18px;
  line-height: 22px;
  font-weight: 600;
  white-space: nowrap;
`;

const Thread = styled.div`
  flex: none;
  height: 676.5px;
  display: flex;
  flex-direction: column;
  align-items: flex-end;
  padding: 17.5px 17.5px 0;
  background: #f1f1f6;
`;

const Bubble = styled.div`
  width: ${(p) => p.$w}px;
  height: ${(p) => p.$h}px;
  margin-bottom: 42.5px;
  padding: 17.3px 0 0 17.5px;
  border-radius: 10px;
  background: ${(p) => (p.$mine ? BLUE : "#fefefe")};
  color: ${(p) => (p.$mine ? "#eaf5ff" : "#111")};
`;

const Line = styled.p`
  margin: 0;
  white-space: nowrap;
  font-size: 18px;
  line-height: 23.95px;
  letter-spacing: ${(p) => p.$ls}px;
`;

const Send = styled.button`
  flex: none;
  align-self: flex-end;
  display: grid;
  place-items: center;
  border: 0;
  padding: 0;
  width: 54.6px;
  height: 54.6px;
  margin-top: 22.5px;
  border-radius: 50%;
  background: ${BLUE};
`;

function ChatScreen() {
  return (
    <Phone $top={108} $left={24}>
      <StatusBar />
      <ChatHead>
        <Glyph width="20" height="18" viewBox="0 0 20 18">
          <path d="M8.800 1 1 8.400 8.800 16V11.600C13.500 11.500 16.300 12.600 18.800 16.200 18.600 9.600 15 5.500 8.800 5.200Z" fill="none" stroke={BLUE} strokeWidth="1.3" strokeLinejoin="round" />
        </Glyph>
        <ChatName>Nathan Wick</ChatName>
      </ChatHead>
      <Thread>
        <Bubble $mine $w={410.5} $h={152.5}>
          <Line $ls={-0.24}>Hi, I lost a Phone at the same location that</Line>
          <Line $ls={-0.32}>you found a Phone. Here's a description of</Line>
          <Line $ls={-0.21}>the Phone that I lost: iPhone 11 with a black</Line>
          <Line $ls={-0.3}>Outterbox Case and slightly cracked screen.</Line>
          <Line $ls={-0.27}>Does this describe the Phone that you found?</Line>
        </Bubble>
        <Bubble $w={414.5} $h={82}>
          <Line $ls={-0.2}>Yes, that’s it! I’m still at the park if you’d like to</Line>
          <Line $ls={-0.32}>come and pick it up now.</Line>
        </Bubble>
        <Bubble $mine $w={201.5} $h={57}>
          <Line $ls={-0.32}>Perfect! On my way!</Line>
        </Bubble>
      </Thread>
      <Send>
        <Glyph width="16" height="20" viewBox="0 0 16 20">
          <path d="M8 18.500V2M2 8l6-6.200L14 8" fill="none" stroke="#fff" strokeWidth="1.6" strokeLinecap="round" strokeLinejoin="round" />
        </Glyph>
      </Send>
      <TabBar active="Message" pt={16.5} />
      <HomeBar $mb={8.5} />
    </Phone>
  );
}

export default function App() {
  return (
    <>
      <GlobalStyle />
      <Page>
        <SignIn />
        <FindScreen />
        <PostScreen />
        <ChatScreen />
      </Page>
    </>
  );
}
